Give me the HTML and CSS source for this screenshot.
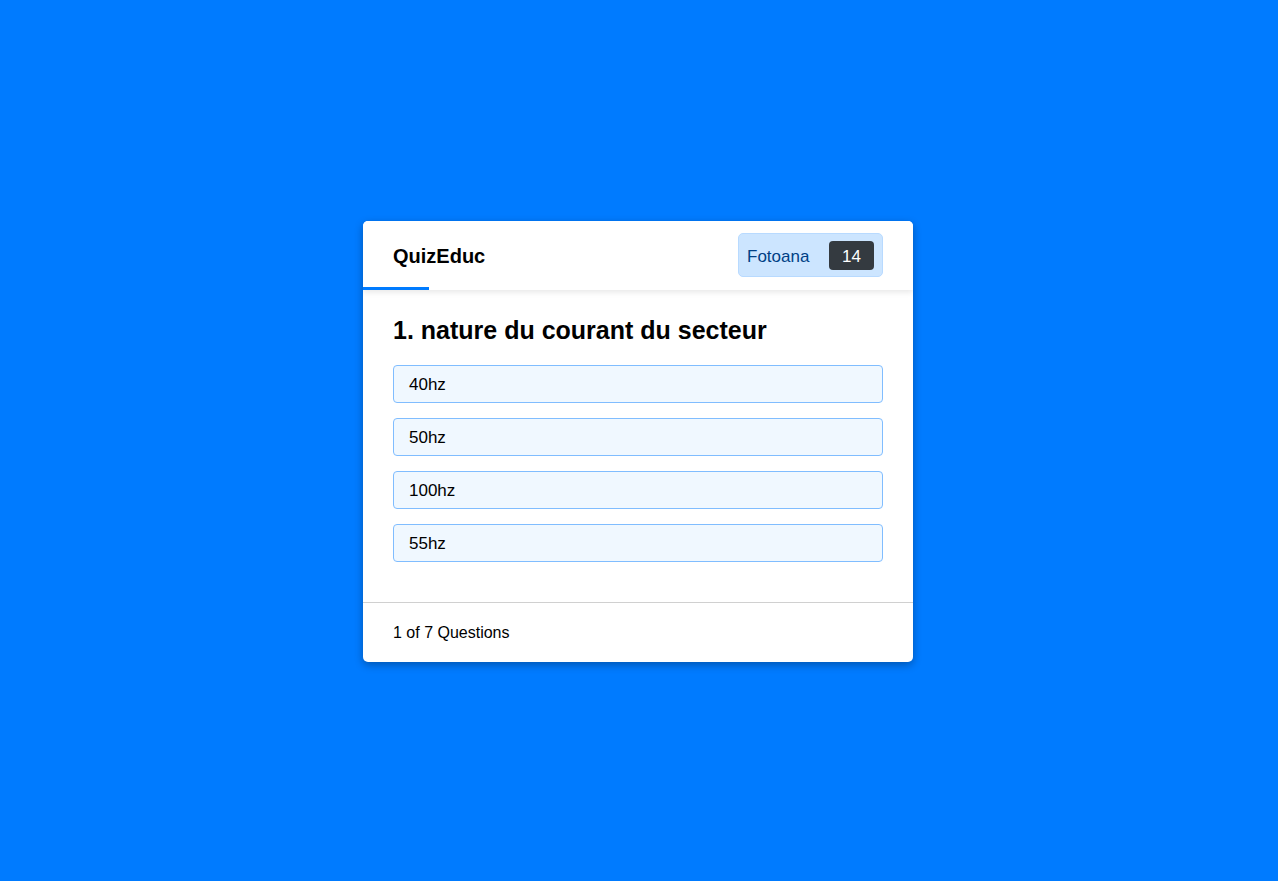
FILE: index.html
```html
<!DOCTYPE html>
<html>
<head>
<meta charset="utf-8">
<link rel="stylesheet" href="styles.css">
</head>
<body>
<div class="card">
  <div class="header">
    <div class="brand">QuizEduc</div>
    <div class="score">
      <span class="score-label">Fotoana</span>
      <span class="score-badge">14</span>
    </div>
    <div class="progress"></div>
  </div>
  <div class="body">
    <h2 class="question">1. nature du courant du secteur</h2>
    <div class="option">40hz</div>
    <div class="option">50hz</div>
    <div class="option">100hz</div>
    <div class="option">55hz</div>
  </div>
  <div class="footer">1 of 7 Questions</div>
</div>
</body>
</html>
```
FILE: styles.css
```css
html, body {
  margin: 0;
  height: 100%;
}
body {
  background: #007bff;
  font-family: "Liberation Sans", Arial, sans-serif;
  display: flex;
  align-items: center;
  justify-content: center;
}
.card {
  width: 550px;
  margin: 2px 2px 0 0;
  background: #fff;
  border-radius: 5px;
  box-shadow: 0 3px 8px rgba(0, 0, 0, 0.3);
  overflow: hidden;
}
.header {
  position: relative;
  z-index: 1;
  height: 69px;
  box-sizing: border-box;
  padding: 12px 30px 13px;
  display: flex;
  align-items: center;
  justify-content: space-between;
  background: #fff;
  box-shadow: 0 2px 6px rgba(0, 0, 0, 0.1);
}
.brand {
  font-weight: bold;
  font-size: 20px;
  color: #000;
  padding-top: 2px;
}
.score {
  display: flex;
  align-items: center;
  justify-content: space-between;
  box-sizing: border-box;
  width: 145px;
  height: 44px;
  padding: 0 8px 0 8px;
  background: #cce5ff;
  border: 1px solid #b8daff;
  border-radius: 5px;
}
.score-label {
  color: #004085;
  font-size: 17px;
  padding-top: 3px;
}
.score-badge {
  display: flex;
  align-items: center;
  justify-content: center;
  box-sizing: border-box;
  width: 45px;
  height: 29px;
  padding-top: 3px;
  margin-top: 1px;
  background: #343a40;
  color: #fff;
  border-radius: 4px;
  font-size: 17px;
}
.progress {
  position: absolute;
  left: 0;
  bottom: 0;
  width: 66px;
  height: 3px;
  background: #007bff;
}
.body {
  padding: 26px 30px 25px;
}
.question {
  margin: 0 0 20px;
  font-size: 25px;
  line-height: 29px;
  font-weight: bold;
  color: #000;
}
.option {
  padding: 9px 15px 7px;
  font-size: 17px;
  line-height: 20px;
  background: #f0f8ff;
  border: 1px solid #80bdff;
  border-radius: 4px;
  margin-bottom: 15px;
  color: #000;
}
.footer {
  border-top: 1px solid #d0d0d0;
  padding: 21px 30px 20px;
  font-size: 16px;
  line-height: 18px;
  color: #000;
}
```
